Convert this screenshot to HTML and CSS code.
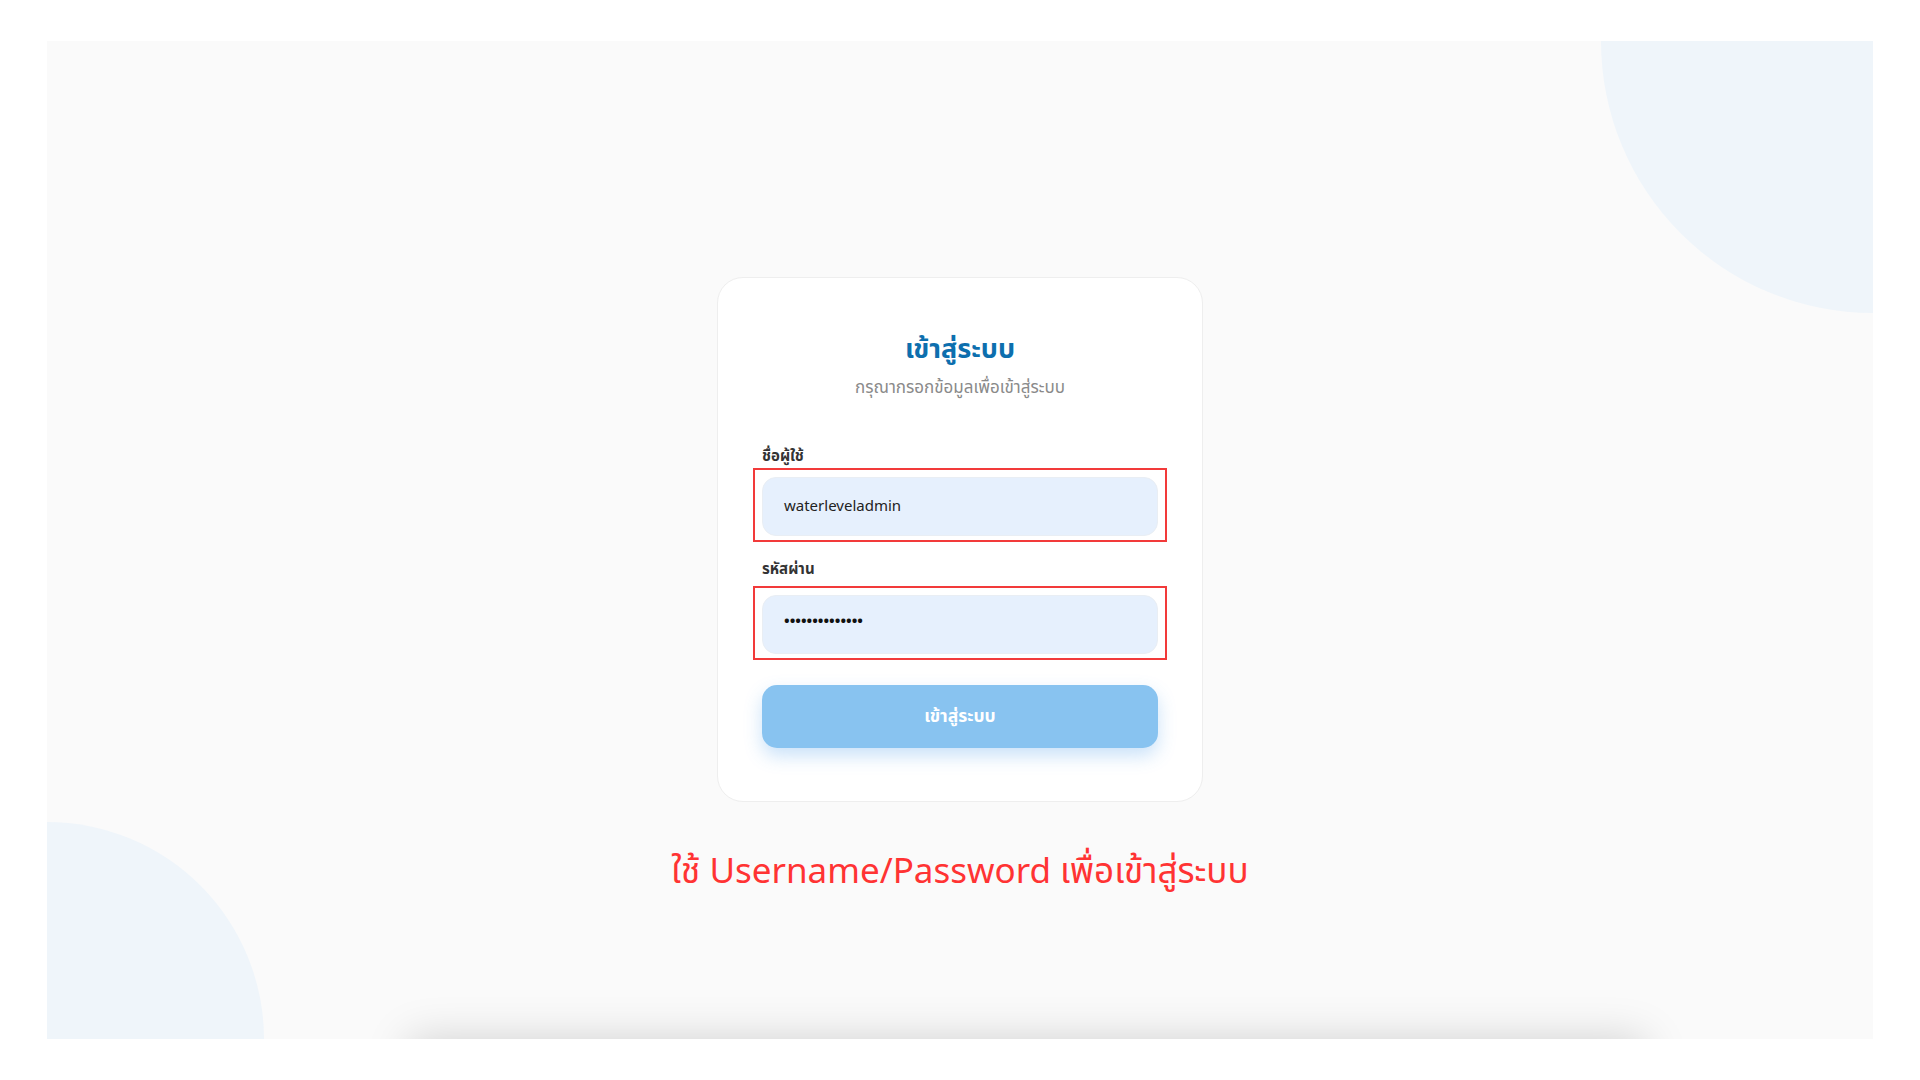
FILE: index.html
```html
<!DOCTYPE html>
<html lang="th">
<head>
<meta charset="utf-8">
<title>เข้าสู่ระบบ</title>
<link rel="stylesheet" href="styles.css">
</head>
<body>
<div class="panel">
  <div class="blob blob-tr"></div>
  <div class="blob blob-bl"></div>
  <div class="footer-shadow"></div>
  <div class="card">
    <h1 class="title">เข้าสู่ระบบ</h1>
    <p class="subtitle">กรุณากรอกข้อมูลเพื่อเข้าสู่ระบบ</p>
    <form class="form">
      <label class="label">ชื่อผู้ใช้</label>
      <div class="annot">
        <div class="input">waterleveladmin</div>
      </div>
      <label class="label label-2">รหัสผ่าน</label>
      <div class="annot">
        <div class="input input-pass">••••••••••••••</div>
      </div>
      <div class="btn">เข้าสู่ระบบ</div>
    </form>
  </div>
  <p class="note">ใช้ Username/Password เพื่อเข้าสู่ระบบ</p>
</div>
</body>
</html>
```
FILE: styles.css
```css
* { box-sizing: border-box; }
html, body {
  margin: 0;
  padding: 0;
  background: #ffffff;
}
body {
  width: 1920px;
  height: 1080px;
  padding: 41px 47px 0;
  font-family: "Noto Sans Thai", "Noto Sans Thai UI", "Noto Sans", "DejaVu Sans", sans-serif;
}
.panel {
  position: relative;
  overflow: hidden;
  height: 998px;
  background: #fafafa;
  display: flex;
  flex-direction: column;
  align-items: center;
  padding-top: 236px;
}
.blob {
  position: absolute;
  border-radius: 50%;
  background: #eff5fa;
}
.blob-tr {
  width: 544px;
  height: 544px;
  right: -272px;
  top: -272px;
}
.blob-bl {
  width: 434px;
  height: 434px;
  left: -217px;
  bottom: -217px;
}
.footer-shadow {
  position: absolute;
  left: 362px;
  width: 1236px;
  height: 60px;
  bottom: -60px;
  background: #fff;
  box-shadow: 0 0 44px rgba(0, 0, 0, 0.17);
}
.card {
  position: relative;
  width: 486px;
  height: 525px;
  background: #ffffff;
  border: 1px solid #eeeeee;
  border-radius: 26px;
  padding: 54px 44px 0;
}
.title {
  margin: 0;
  text-align: center;
  font-size: 27px;
  line-height: 36px;
  font-weight: 700;
  color: #0d6fae;
}
.subtitle {
  margin: 9px 0 0;
  text-align: center;
  font-size: 17px;
  line-height: 22px;
  color: #8a8a8a;
}
.form {
  margin-top: 48px;
  display: flex;
  flex-direction: column;
}
.label {
  display: block;
  font-size: 15px;
  line-height: 20px;
  font-weight: 700;
  color: #333333;
  margin-bottom: 1px;
}
.label-2 {
  margin-top: 18px;
  margin-bottom: 6px;
}
.annot {
  border: 2px solid #f23a3a;
  margin: 0 -9px;
  padding: 7px 7px 4px;
}
.input {
  height: 59px;
  border-radius: 14px;
  background: #e6f0fd;
  border: 1px solid #e9eef4;
  padding: 0 21px;
  display: flex;
  align-items: center;
  font-size: 15px;
  color: #222222;
}
.input-pass {
  font-size: 15px;
  font-weight: 700;
  letter-spacing: 0px;
  color: #111;
  padding-bottom: 7px;
}
.btn {
  margin-top: 25px;
  height: 63px;
  border-radius: 15px;
  background: #88c3f0;
  color: #ffffff;
  font-size: 17.5px;
  font-weight: 700;
  display: flex;
  align-items: center;
  justify-content: center;
  box-shadow: 0 8px 18px rgba(66, 150, 235, 0.28);
}
.note {
  position: relative;
  margin: 47px 0 0;
  font-size: 35px;
  line-height: 48px;
  color: #ff3333;
  font-family: "Noto Sans Thai", "Noto Sans", sans-serif;
}
```
